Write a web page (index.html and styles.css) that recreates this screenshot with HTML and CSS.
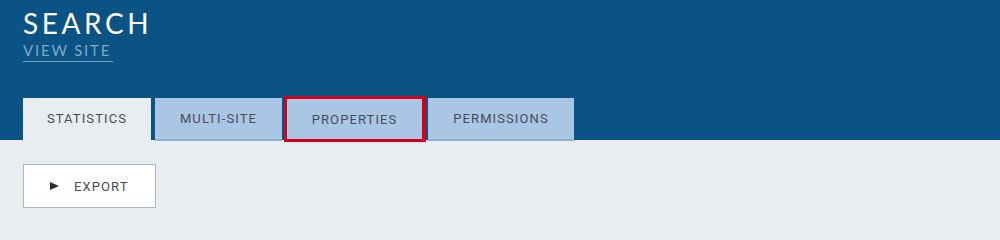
FILE: index.html
```html
<!DOCTYPE html>
<html>
<head>
<meta charset="utf-8">
<link rel="stylesheet" href="styles.css">
</head>
<body>
<header class="header">
  <h1 class="title">SEARCH</h1>
  <a class="view-site" href="#">VIEW SITE</a>
  <nav class="tabs">
    <div class="tab tab-active tab-stats">STATISTICS</div>
    <div class="tab tab-multi">MULTI-SITE</div>
    <div class="tab tab-props tab-focus">PROPERTIES</div>
    <div class="tab tab-perms">PERMISSIONS</div>
  </nav>
</header>
<main class="content">
  <button class="export-btn"><span class="play"></span><span class="export-label">EXPORT</span></button>
</main>
</body>
</html>
```
FILE: styles.css
```css
* { box-sizing: border-box; }
html, body { margin: 0; padding: 0; }
body {
  background: #e8edf1;
  font-family: Roboto, "Liberation Sans", sans-serif;
  width: 1000px;
  height: 218px;
  overflow: hidden;
}
.header {
  background: #0b5384;
  padding: 6px 23px 0;
  height: 140px;
  display: flex;
  flex-direction: column;
  align-items: flex-start;
}
.title {
  margin: 0;
  font-family: Lato, "Open Sans", sans-serif;
  font-weight: 400;
  font-size: 28px;
  line-height: 34px;
  letter-spacing: 3.6px;
  color: #ffffff;
}
.view-site {
  font-family: Lato, "Open Sans", sans-serif;
  font-size: 15px;
  line-height: 18px;
  letter-spacing: 1.8px;
  color: #7ea6cb;
  text-decoration: none;
  border-bottom: 1px solid #7ea6cb;
  padding-top: 1px;
  padding-bottom: 2px;
  padding-right: 2px;
}
.tabs {
  display: flex;
  align-items: flex-end;
  margin-top: 34px;
}
.tab {
  height: 43px;
  display: flex;
  align-items: center;
  justify-content: center;
  font-size: 13px;
  font-weight: 400;
  letter-spacing: 1.1px;
  color: #4a4a58;
  background: #a9c6e4;
  border-bottom: 2px solid #8fafcf;
}
.tab-active {
  background: #e8edf1;
  border-bottom-color: #e8edf1;
}
.tab-stats { width: 128px; margin-right: 4px; }
.tab-multi { width: 127px; margin-right: 2px; }
.tab-props {
  width: 142px;
  height: 46px;
  margin-bottom: -1px;
  border: 3px solid #d0021b;
  border-right-width: 4px;
  margin-right: 2px;
}
.tab-perms { width: 146px; }
.content {
  padding: 24px 23px;
}
.export-btn {
  width: 133px;
  height: 44px;
  background: #ffffff;
  border: 1px solid #aeb8c3;
  display: flex;
  align-items: center;
  padding: 0 0 0 26px;
  font-family: Roboto, "Liberation Sans", sans-serif;
  font-size: 13px;
  letter-spacing: 1.1px;
  color: #4a4a58;
  cursor: pointer;
}
.play {
  width: 0;
  height: 0;
  border-top: 4px solid transparent;
  border-bottom: 4px solid transparent;
  border-left: 9px solid #2c2c3a;
  margin-right: 15px;
}
```
